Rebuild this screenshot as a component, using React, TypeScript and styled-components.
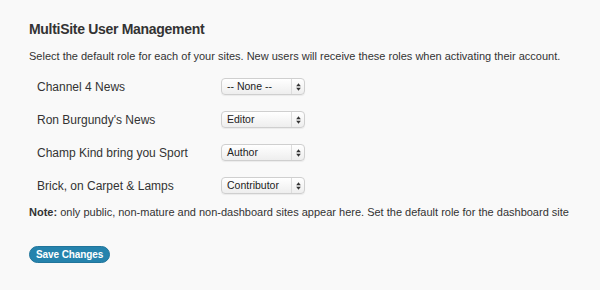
import styled, { createGlobalStyle } from "styled-components";

const GlobalStyle = createGlobalStyle`
  html, body {
    margin: 0;
    padding: 0;
    background: #f9f9f9;
  }
  body {
    font-family: "Liberation Sans", Arial, sans-serif;
    color: #333;
  }
`;

const Page = styled.div`
  width: 600px;
  height: 290px;
  box-sizing: border-box;
  padding: 20px 29px 0 29px;
  background: #f9f9f9;
`;

const Title = styled.h2`
  margin: 0;
  font-size: 14px;
  letter-spacing: -0.3px;
  font-weight: bold;
  color: #333;
  line-height: 18px;
`;

const Description = styled.p`
  margin: 11px 0 0 0;
  font-size: 11px;
  line-height: 14px;
  color: #333;
  white-space: nowrap;
`;

const SiteList = styled.div`
  margin-top: 15px;
  padding-left: 8px;
  display: grid;
  grid-template-columns: 184px auto;
  row-gap: 16px;
  align-items: center;
`;

const SiteName = styled.div`
  font-size: 12px;
  color: #333;
`;

const RoleSelect = styled.div`
  display: flex;
  align-items: stretch;
  width: 84px;
  height: 17px;
  box-sizing: border-box;
  border: 1px solid #cfcfcf;
  border-radius: 4px;
  background: linear-gradient(#ffffff, #eeeeee);
  box-shadow: 0 1px 1px rgba(0, 0, 0, 0.06);
  overflow: hidden;
`;

const RoleValue = styled.span`
  flex: 1;
  padding-left: 5px;
  font-size: 10.5px;
  line-height: 15px;
  color: #222;
  white-space: nowrap;
`;

const Arrows = styled.span`
  width: 12px;
  border-left: 1px solid #dcdcdc;
  display: flex;
  align-items: center;
  justify-content: center;
`;

const Note = styled.p`
  margin: 11px 0 0 0;
  font-size: 11px;
  line-height: 14px;
  color: #333;
  white-space: nowrap;
`;

const SaveButton = styled.button`
  margin-top: 27px;
  height: 17px;
  padding: 0 6px;
  border: 1px solid #21759b;
  border-radius: 10px;
  background: #2583ad;
  color: #fff;
  font-family: "Liberation Sans", Arial, sans-serif;
  font-size: 10px;
  letter-spacing: -0.1px;
  font-weight: bold;
  line-height: 15px;
`;

const sites = [
  { name: "Channel 4 News", role: "-- None --" },
  { name: "Ron Burgundy's News", role: "Editor" },
  { name: "Champ Kind bring you Sport", role: "Author" },
  { name: "Brick, on Carpet & Lamps", role: "Contributor" },
];

function UpDown() {
  return (
    <svg width="5" height="8" viewBox="0 0 5 8">
      <path d="M2.5 0.3 L4.8 3.2 L0.2 3.2 Z" fill="#333" />
      <path d="M2.5 7.7 L4.8 4.8 L0.2 4.8 Z" fill="#333" />
    </svg>
  );
}

export default function App() {
  return (
    <>
      <GlobalStyle />
      <Page>
        <Title>MultiSite User Management</Title>
        <Description>
          Select the default role for each of your sites. New users will receive these roles when activating their account.
        </Description>

        <SiteList>
          {sites.map((site) => [
            <SiteName key={site.name}>{site.name}</SiteName>,
            <RoleSelect key={site.name + "-role"}>
              <RoleValue>{site.role}</RoleValue>
              <Arrows>
                <UpDown />
              </Arrows>
            </RoleSelect>,
          ])}
        </SiteList>

        <Note>
          <b>Note:</b> only public, non-mature and non-dashboard sites appear here. Set the default role for the dashboard site
        </Note>

        <SaveButton>Save Changes</SaveButton>
      </Page>
    </>
  );
}
